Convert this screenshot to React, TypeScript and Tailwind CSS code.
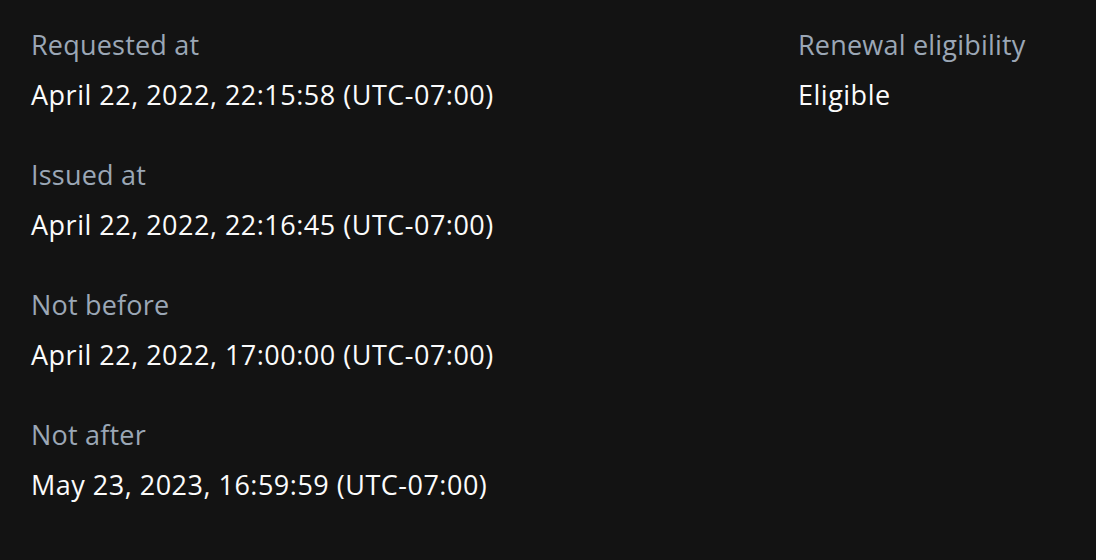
const left = [
  { label: "Requested at", value: "April 22, 2022, 22:15:58 (UTC-07:00)" },
  { label: "Issued at", value: "April 22, 2022, 22:16:45 (UTC-07:00)" },
  { label: "Not before", value: "April 22, 2022, 17:00:00 (UTC-07:00)" },
  { label: "Not after", value: "May 23, 2023, 16:59:59 (UTC-07:00)" },
];

function Field({ label, value }: { label: string; value: string }) {
  return (
    <div className="flex flex-col">
      <div className="text-[#9ba7b6] h-[50px] leading-[50px] tracking-[0.2px]">{label}</div>
      <div className="text-[#fbfbfb] h-[50px] leading-[50px] tracking-[0.5px] font-medium">{value}</div>
    </div>
  );
}

export default function App() {
  return (
    <div
      className="w-[1096px] h-[560px] bg-[#131313] text-[27px] px-[31px] pt-[20px] flex"
      style={{ fontFamily: '"Open Sans", sans-serif' }}
    >
      <div className="w-[767px] flex flex-col gap-[30px]">
        {left.map((f) => (
          <Field key={f.label} label={f.label} value={f.value} />
        ))}
      </div>
      <div className="flex-1">
        <Field label="Renewal eligibility" value="Eligible" />
      </div>
    </div>
  );
}
